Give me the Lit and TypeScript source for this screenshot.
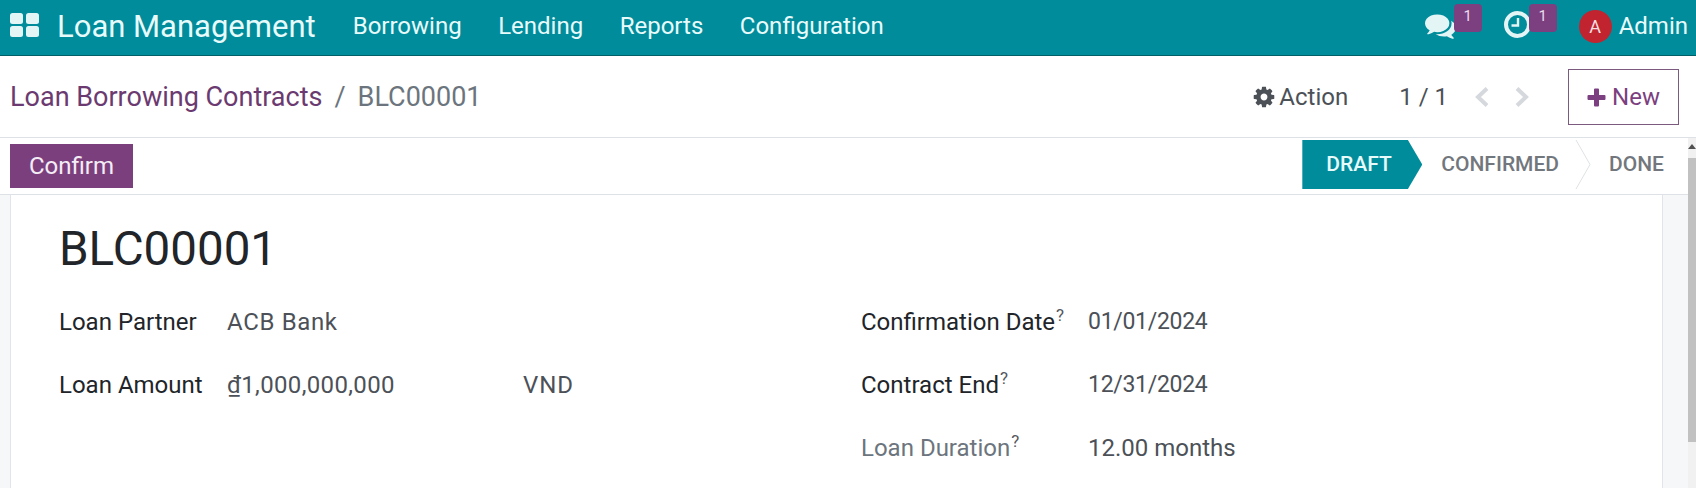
import { LitElement, html, css, svg } from "lit";
import { customElement } from "lit/decorators.js";

const COMMENTS = "M1408 768q0 139-94 257t-256.500 186.500-353.500 68.500q-86 0-176-16-124 88-278 128-36 9-86 16h-3q-11 0-20.500-8t-11.500-21q-1-3-1-6.500t.5-6.500 2-6l2.500-5 3.500-5.500 4-5 4.500-5 4-4.500q5-6 23-25t26-29.500 22.500-29 25-38.500 20.500-44q-124-72-195-177t-71-224q0-139 94-257t256.500-186.500 353.500-68.500 353.500 68.500 256.500 186.500 94 257zm384 256q0 120-71 224.500t-195 176.500q10 24 20.500 44t25 38.500 22.500 29 26 29.500 23 25q1 1 4 4.500t4.500 5 4 5 3.500 5.500l2.500 5 2 6 .5 6.500-1 6.500q-3 14-13 22t-22 7q-50-7-86-16-154-40-278-128-90 16-176 16-271 0-472-132 58 4 88 4 161 0 309-45t264-129q125-92 192-212t67-254q0-77-23-152 129 71 204 178t75 230z";
const COG = "M1152 896q0-106-75-181t-181-75-181 75-75 181 75 181 181 75 181-75 75-181zm512-109v222q0 12-8 23t-20 13l-185 28q-19 54-39 91 35 50 107 138 10 12 10 25t-9 23q-27 37-99 108t-94 71q-12 0-26-9l-138-108q-44 23-91 38-16 136-29 186-7 28-36 28h-222q-14 0-24.500-8.500t-11.500-21.500l-28-184q-49-16-90-37l-141 107q-10 9-25 9-14 0-25-11-126-114-165-168-7-10-7-23 0-12 8-23 15-21 51-66.500t54-70.500q-27-50-41-99l-183-27q-13-2-21-12.500t-8-23.500v-222q0-12 8-23t19-13l186-28q14-46 39-92-40-57-107-138-10-12-10-24 0-10 9-23 26-36 98.500-107.500t94.500-71.500q13 0 26 10l138 107q44-23 91-38 16-136 29-186 7-28 36-28h222q14 0 24.500 8.500t11.500 21.500l28 184q49 16 90 37l142-107q9-9 24-9 13 0 25 10 129 119 165 170 7 8 7 22 0 12-8 23-15 21-51 66.500t-54 70.500q26 50 41 98l183 28q13 2 21 12.500t8 23.500z";

@customElement("app-root")
export class AppRoot extends LitElement {
  static styles = css`
    :host { display: flex; flex-direction: column; width: 1696px; height: 488px; overflow: hidden; background: #fff;
      font-family: Roboto, "Liberation Sans", sans-serif; color: #212529; }
    .nav { flex: none; height: 56px; box-sizing: border-box; padding-bottom: 3px; background: #008c9b; border-bottom: 1px solid #015f68; display: flex; align-items: center; color: #e8fbfb; }
    .apps { display: grid; grid-template-columns: 13px 13px; grid-auto-rows: 11px; gap: 2px 3px; margin: -2px 0 0 10px; }
    .apps i { background: #e4f5f6; border-radius: 2.500px; }
    .brand { font-size: 31px; margin-left: 18px; }
    .menu { display: flex; gap: 36.500px; font-size: 24px; margin-left: 37px; }
    .sys { margin-left: auto; display: flex; align-items: center; }
    .ico { position: relative; display: flex; }
    .chat { margin-top: -1px; }
    .badge { position: absolute; width: 28px; height: 28px; background: #7c3f7f; border-radius: 4px; font-size: 15px; display: flex; justify-content: center; padding-top: 3px; box-sizing: border-box; color: #e9dcec; top: -6px; left: 29px; }
    .clock { margin: -3px 0 0 48px; }
    .clock .badge { left: 25px; top: -7px; }
    .avatar { margin: 1px 0 0 48px; width: 33px; height: 33px; border-radius: 50%; background: #c1242f; color: #f6dfe0; font-size: 18px; display: flex; align-items: center; justify-content: center; }
    .admin { font-size: 24px; margin: 0 8px 0 7px; }
    .cp { flex: none; height: 82px; box-sizing: border-box; padding-top: 1px; border-bottom: 1px solid #dee2e6; display: flex; align-items: center; }
    .crumbs { font-size: 27px; margin-left: 10px; display: flex; color: #6c757d; }
    .crumbs a { color: #6b3a70; }
    .crumbs span { margin: 0 12px; }
    .actions { margin-left: auto; display: flex; align-items: center; color: #4c5158; font-size: 24px; }
    .act { display: flex; align-items: center; gap: 3px; }
    .pager { margin-left: 51px; }
    .chev { margin-left: 26px; display: flex; gap: 24px; }
    .new { margin: 0 17px 0 38px; width: 111px; height: 56px; box-sizing: border-box; border: 1px solid #7c5a80; color: #7c3f7f; display: flex; align-items: center; justify-content: center; gap: 6px; }
    .body { flex: 1; display: flex; min-height: 0; }
    .col { flex: 1; display: flex; flex-direction: column; min-width: 0; }
    .status { flex: none; height: 57px; box-sizing: border-box; border-bottom: 1px solid #dee2e6; display: flex; align-items: center; justify-content: space-between; padding-left: 10px; }
    .confirm { width: 123px; height: 44px; background: #7c3f7e; color: #f4edf5; font-size: 24px; display: flex; align-items: center; justify-content: center; }
    .steps { display: flex; height: 49px; align-self: flex-start; margin-top: 2px; padding-bottom: 1px; box-sizing: border-box; align-items: center; font-size: 21px; font-weight: 500; color: #72777d; }
    .draft { width: 120px; height: 49px; margin-bottom: -1px; background: #008c9b; color: #e8fbfb; clip-path: polygon(0 0, 88% 0, 100% 50%, 88% 100%, 0 100%); display: flex; align-items: center; box-sizing: border-box; padding: 0 0 1px 24px; }
    .conf { margin-left: 19px; }
    .sep { margin: 0 0 -1px 16px; display: block; }
    .done { margin: 0 24px 0 18px; }
    .bg { flex: 1; background: #f6f7f9; padding: 0 25px 0 10px; min-height: 0; overflow: hidden; }
    .sheet { background: #fff; border-left: 1px solid #e1e4e8; border-right: 1px solid #e1e4e8; height: 100%; box-sizing: border-box; padding: 27px 48px 0; }
    h1 { margin: 0; font-weight: 400; font-size: 47.500px; line-height: 54px; color: #212529; }
    .grid { display: grid; grid-template-columns: 802px 1fr; margin-top: 14px; font-size: 24px; }
    .row { display: flex; height: 63px; align-items: center; }
    .lab { width: 168px; flex: none; color: #212529; }
    .right .lab { width: 227px; }
    .val { color: #4c5158; }
    .wide { letter-spacing: .65px; }
    .num { width: 296px; letter-spacing: .35px; }
    .cur { letter-spacing: .9px; }
    .date { font-size: 23px; letter-spacing: -.3px; }
    .muted { color: #6c757d; }
    sup { font-size: 17px; line-height: 0; vertical-align: 9px; color: #55595f; margin-left: 1px; }
    .u { text-decoration: underline; }
    .sb { flex: none; width: 8px; background: #f1f1f1; display: flex; flex-direction: column; }
    .sb b { display: block; width: 0; height: 0; margin: 6px auto 9px; border: 4px solid transparent; border-top: 0; border-bottom: 5px solid #505050; }
    .sb i { display: block; height: 284px; background: #c1c1c1; }
  `;

  render() {
    return html`
      <div class="nav">
        <div class="apps"><i></i><i></i><i></i><i></i></div>
        <div class="brand">Loan Management</div>
        <div class="menu"><span>Borrowing</span><span>Lending</span><span>Reports</span><span>Configuration</span></div>
        <div class="sys">
          <div class="ico chat">
            <svg width="31" height="31" viewBox="0 0 1792 1792" fill="#e4f5f6">${svg`<path d=${COMMENTS}></path>`}</svg>
            <span class="badge">1</span>
          </div>
          <div class="ico clock">
            <svg width="27" height="27" viewBox="0 0 27 27" fill="none" stroke="#e4f5f6" stroke-width="4">
              <circle cx="13.500" cy="13.500" r="11.500"></circle>
              <path d="M14 7v7.500H7.500" stroke-width="2.400"></path>
            </svg>
            <span class="badge">1</span>
          </div>
          <div class="avatar">A</div>
          <div class="admin">Admin</div>
        </div>
      </div>
      <div class="cp">
        <div class="crumbs"><a>Loan Borrowing Contracts</a><span>/</span>BLC00001</div>
        <div class="actions">
          <div class="act">
            <svg width="24" height="24" viewBox="0 0 1792 1792" fill="#4c5158">${svg`<path d=${COG}></path>`}</svg>
            Action
          </div>
          <div class="pager">1 / 1</div>
          <div class="chev">
            <svg width="16" height="22" viewBox="0 0 16 22" fill="none" stroke="#d5d8dc" stroke-width="4"><path d="M13 2.500 4 11l9 8.500"></path></svg>
            <svg width="16" height="22" viewBox="0 0 16 22" fill="none" stroke="#d5d8dc" stroke-width="4"><path d="M3 2.500 12 11l-9 8.500"></path></svg>
          </div>
          <div class="new">
            <svg width="19" height="19" viewBox="0 0 19 19" fill="#7c3f7f"><path d="M7 1.500a1 1 0 0 1 1-1h3a1 1 0 0 1 1 1V7h5.500a1 1 0 0 1 1 1v3a1 1 0 0 1-1 1H12v5.500a1 1 0 0 1-1 1H8a1 1 0 0 1-1-1V12H1.500a1 1 0 0 1-1-1V8a1 1 0 0 1 1-1H7z"></path></svg>
            New
          </div>
        </div>
      </div>
      <div class="body">
        <div class="col">
          <div class="status">
            <div class="confirm">Confirm</div>
            <div class="steps">
              <div class="draft">DRAFT</div>
              <div class="conf">CONFIRMED</div>
              <svg class="sep" width="16" height="49" viewBox="0 0 16 49" fill="none" stroke="#dfe2e5"><path d="M1 0 15 24.500 1 49"></path></svg>
              <div class="done">DONE</div>
            </div>
          </div>
          <div class="bg">
            <div class="sheet">
              <h1>BLC00001</h1>
              <div class="grid">
                <div class="left">
                  <div class="row"><div class="lab">Loan Partner</div><div class="val wide">ACB Bank</div></div>
                  <div class="row"><div class="lab">Loan Amount</div><div class="val num"><span class="u">₫</span>1,000,000,000</div><div class="val cur">VND</div></div>
                </div>
                <div class="right">
                  <div class="row"><div class="lab">Confirmation Date<sup>?</sup></div><div class="val date">01/01/2024</div></div>
                  <div class="row"><div class="lab">Contract End<sup>?</sup></div><div class="val date">12/31/2024</div></div>
                  <div class="row"><div class="lab muted">Loan Duration<sup>?</sup></div><div class="val">12.00 months</div></div>
                </div>
              </div>
            </div>
          </div>
        </div>
        <div class="sb"><b></b><i></i></div>
      </div>
    `;
  }
}
